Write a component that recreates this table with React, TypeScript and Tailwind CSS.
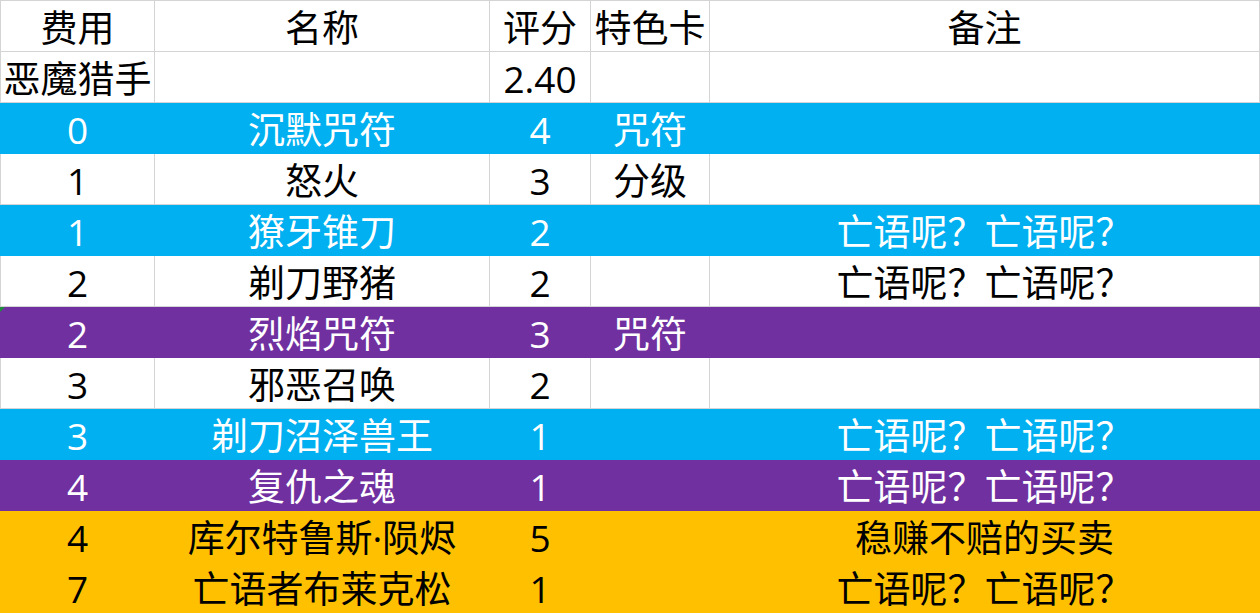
import React from "react";

type Row = {
  cells: string[];
  tone: "white" | "blue" | "purple" | "orange";
};

const rows: Row[] = [
  { cells: ["费用", "名称", "评分", "特色卡", "备注"], tone: "white" },
  { cells: ["恶魔猎手", "", "2.40", "", ""], tone: "white" },
  { cells: ["0", "沉默咒符", "4", "咒符", ""], tone: "blue" },
  { cells: ["1", "怒火", "3", "分级", ""], tone: "white" },
  { cells: ["1", "獠牙锥刀", "2", "", "亡语呢？亡语呢？"], tone: "blue" },
  { cells: ["2", "剃刀野猪", "2", "", "亡语呢？亡语呢？"], tone: "white" },
  { cells: ["2", "烈焰咒符", "3", "咒符", ""], tone: "purple" },
  { cells: ["3", "邪恶召唤", "2", "", ""], tone: "white" },
  { cells: ["3", "剃刀沼泽兽王", "1", "", "亡语呢？亡语呢？"], tone: "blue" },
  { cells: ["4", "复仇之魂", "1", "", "亡语呢？亡语呢？"], tone: "purple" },
  { cells: ["4", "库尔特鲁斯·陨烬", "5", "", "稳赚不赔的买卖"], tone: "orange" },
  { cells: ["7", "亡语者布莱克松", "1", "", "亡语呢？亡语呢？"], tone: "orange" },
];

const toneRow: Record<Row["tone"], string> = {
  white: "bg-white text-black",
  blue: "bg-[#00b0f0] text-white",
  purple: "bg-[#7030a0] text-white",
  orange: "bg-[#ffc000] text-black",
};

const widths = ["w-[155px]", "w-[335px]", "w-[101px]", "w-[119px]", "w-[550px]"];

export default function App() {
  return (
    <div
      className="w-[1260px] h-[613px] overflow-hidden bg-white border-t border-[#d4d4d4]"
      style={{ fontFamily: '"Open Sans", "Noto Sans CJK SC", sans-serif' }}
    >
      {rows.map((r, i) => {
        const white = r.tone === "white";
        return (
          <div key={i} className={`relative flex h-[51px] ${toneRow[r.tone]}`}>
            {r.cells.map((c, j) => (
              <div
                key={j}
                className={`${widths[j]} shrink-0 h-full flex items-center justify-center whitespace-nowrap text-[37px] leading-none border-b border-r ${
                  white ? "border-[#d4d4d4]" : "border-transparent"
                } ${j === 0 ? "border-l" : ""}`}
              >
                <span className="pt-[3px]">{c}</span>
              </div>
            ))}
            {i === 6 && (
              <div className="absolute left-0 top-0 w-0 h-0 border-t-[5px] border-r-[5px] border-t-[#1e8c3a] border-r-transparent" />
            )}
          </div>
        );
      })}
    </div>
  );
}
